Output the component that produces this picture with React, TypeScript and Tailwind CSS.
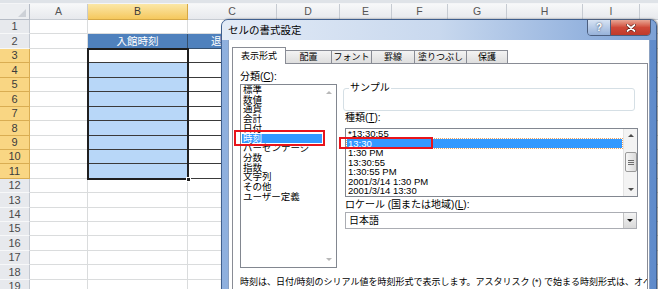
import React from "react";

const colW = ["w-[58px]", "w-[100px]", "w-[89px]", "w-[63px]", "w-[52px]", "w-[56px]", "w-[59px]", "w-[76px]", "w-[57px]", "w-[50px]"];
const colLabel = ["A", "B", "C", "D", "E", "F", "G", "H", "I", ""];
const rowH = ["h-[14px]", "h-[15px]", "h-[14px]", "h-[15px]", "h-[14px]", "h-[15px]", "h-[14px]", "h-[15px]", "h-[14px]", "h-[14px]", "h-[15px]", "h-[14px]", "h-[15px]", "h-[14px]", "h-[14px]", "h-[15px]", "h-[14px]", "h-[15px]", "h-[14px]"];

const categories = ["標準", "数値", "通貨", "会計", "日付", "時刻", "パーセンテージ", "分数", "指数", "文字列", "その他", "ユーザー定義"];
const types = ["*13:30:55", "13:30", "1:30 PM", "13:30:55", "1:30:55 PM", "2001/3/14 1:30 PM", "2001/3/14 13:30"];

function cellClass(r: number, c: number) {
    // c: 0 = A, 1 = B, 2 = C ...
    if (r === 2 && (c === 1 || c === 2)) return "bg-[#4f81bd] text-white border-r border-b border-[#35506f]";
    if (r >= 3 && r <= 11 && c === 1) return (r === 3 ? "bg-white" : "bg-[#b8d7f8]") + " border-r border-b border-[#3a3a3a]";
    if (r >= 3 && r <= 11 && c === 2) return "bg-white border-r border-b border-r-[#dadcdd] border-b-[#3a3a3a]";
    return "bg-white border-r border-b border-[#dadcdd]";
}

function Sheet() {
    return (
        <div className="flex flex-col">
            <div className="h-[4px] bg-[#dfe3e8] border-b border-[#f4f5f7]" />
            <div className="flex h-[16px]">
                <div className="w-[30px] shrink-0 bg-[#eceef1] border-r border-b border-[#b6bcc6] relative">
                    <div className="absolute right-[3px] bottom-[2px] w-0 h-0 border-l-[8px] border-l-transparent border-b-[8px] border-b-[#cdd1d7]" />
                </div>
                {colLabel.map((c, i) => (
                    <div
                        key={i}
                        className={`${colW[i]} shrink-0 flex items-center justify-center border-r border-b text-[10.5px] leading-none ${c === "B" ? "bg-gradient-to-b from-[#fbe7a6] to-[#f5c85c] border-[#d6a845] text-[#3a3a3a]" : "bg-gradient-to-b from-[#f7f8f9] to-[#e7e9ed] border-[#c6cbd2] text-[#555]"}`}
                    >
                        {c}
                    </div>
                ))}
            </div>
            {rowH.map((h, ri) => {
                const r = ri + 1;
                const hl = r >= 3 && r <= 11;
                return (
                    <div key={r} className={`flex ${h}`}>
                        <div className={`w-[30px] shrink-0 flex items-center justify-center border-r border-b text-[11px] leading-none ${hl ? "bg-[#f9d683] border-[#d9ad52] text-[#3c3c3c]" : "bg-[#e7e9ed] border-[#c3c8d0] border-b-[#f7f8f9] text-[#4a4a4a]"}`}>
                            {r}
                        </div>
                        {colLabel.map((c, ci) => (
                            <div key={ci} className={`${colW[ci]} shrink-0 flex items-center justify-center text-[10.5px] leading-none overflow-hidden whitespace-nowrap ${cellClass(r, ci)}`}>
                                {r === 2 && ci === 1 ? "入館時刻" : r === 2 && ci === 2 ? "退館時刻" : ""}
                            </div>
                        ))}
                    </div>
                );
            })}
        </div>
    );
}

function Arrow({ up, color }: { up: boolean; color: string }) {
    return up ? (
        <div className={`w-0 h-0 border-l-[3px] border-r-[3px] border-l-transparent border-r-transparent border-b-[3px] ${color}`} />
    ) : (
        <div className={`w-0 h-0 border-l-[3px] border-r-[3px] border-l-transparent border-r-transparent border-t-[3px] ${color}`} />
    );
}

function Dialog() {
    return (
        <div className="absolute left-[221px] top-[19px] w-[436px] h-[290px] rounded-t-[7px] border border-[#3f5f8e] bg-gradient-to-r from-[#8fb0de] to-[#5f8bcb] shadow-[1px_0_2px_rgba(0,0,0,0.5)]">
            <div className="h-[20px] rounded-t-[6px] bg-gradient-to-r from-[#e3ebf6] via-[#c8d8ee] to-[#7ca1d6] flex items-center pl-[6px] text-[10.5px] leading-none text-black">
                セルの書式設定
            </div>
            <div className="absolute right-[5px] top-[-1px] flex h-[17px] rounded-b-[4px] border border-[#4b5e7e] overflow-hidden">
                <div className="w-[23px] bg-gradient-to-b from-[#d7e3f3] to-[#97b2da] border-r border-[#4b5e7e] flex items-center justify-center text-white font-bold text-[10px] leading-none [text-shadow:0_0_2px_#24364f]">
                    ?
                </div>
                <div className="w-[39px] bg-gradient-to-b from-[#e7a595] via-[#cf4838] to-[#bf3a2c] flex items-center justify-center">
                    <svg width="10" height="8" viewBox="0 0 10 8">
                        <path d="M1.5 1 L8.5 7 M8.5 1 L1.5 7" stroke="#5a1a12" strokeWidth="3" strokeLinecap="round" />
                        <path d="M1.5 1 L8.5 7 M8.5 1 L1.5 7" stroke="#ffffff" strokeWidth="1.8" strokeLinecap="round" />
                    </svg>
                </div>
            </div>
            <div className="mx-[6px] h-[270px] bg-white border-x border-[#8ba1c2] pl-[3px] pt-[7px]">
                {/* tabs */}
                <div className="flex items-end text-[9px] leading-none text-black whitespace-nowrap">
                    <div className="w-[54px] h-[17px] -mb-px relative z-10 bg-white border border-b-0 border-[#898c95] flex items-center justify-center">表示形式</div>
                    {[["配置", "w-[46px]"], ["フォント", "w-[40px]"], ["罫線", "w-[43px]"], ["塗りつぶし", "w-[52px]"], ["保護", "w-[41px]"]].map(([t, w]) => (
                        <div key={t} className={`${w} h-[13px] border-t border-r border-[#898c95] bg-gradient-to-b from-[#f3f3f3] to-[#dedede] flex items-center justify-center`}>
                            {t}
                        </div>
                    ))}
                </div>
                {/* panel */}
                <div className="w-[416px] h-[240px] border border-[#898c95] bg-white overflow-hidden text-black">
                    <div className="flex pl-[7px] pt-[8px] gap-[8px]">
                        <div className="w-[97px] flex flex-col">
                            <div className="h-[10px] text-[10px] leading-[10px]">
                                分類(<span className="underline">C</span>):
                            </div>
                            <div className="mt-[2px] h-[184px] border border-[#828790] flex">
                                <div className="flex-1 text-[9.5px] leading-[9.7px]">
                                    {categories.map((c) => (
                                        <div key={c} className={`ml-[1px] pl-[1px] whitespace-nowrap ${c === "時刻" ? "bg-[#3399ff] text-white" : ""}`}>
                                            {c}
                                        </div>
                                    ))}
                                </div>
                                <div className="w-[14px] flex flex-col justify-between items-center py-[6px]">
                                    <Arrow up color="border-b-[#b8b8b8]" />
                                    <Arrow up={false} color="border-t-[#b8b8b8]" />
                                </div>
                            </div>
                        </div>
                        <div className="w-[293px] flex flex-col">
                            <div className="mt-[16px] h-[23px] w-[292px] -ml-[2px] border border-[#d5dfe5] rounded-[3px] relative">
                                <span className="absolute left-[5px] -top-[6px] bg-white px-[1px] text-[10px] leading-[10px]">サンプル</span>
                            </div>
                            <div className="mt-[2px] h-[10px] text-[10px] leading-[10px]">
                                種類(<span className="underline">T</span>):
                            </div>
                            <div className="mt-[5px] h-[69px] border border-[#828790] flex">
                                <div className="flex-1 text-[9.5px] leading-[9.5px]">
                                    {types.map((t, i) => (
                                        <div key={i} className={`ml-[1px] mr-[1px] pl-[1px] whitespace-nowrap ${i === 1 ? "bg-[#3399ff] text-white outline-dotted outline-1 outline-[#e9a060]" : ""}`}>
                                            {t}
                                        </div>
                                    ))}
                                </div>
                                <div className="w-[14px] bg-[#f3f3f3] border-l border-[#e4e4e4] flex flex-col items-center">
                                    <div className="h-[13px] flex items-center justify-center">
                                        <Arrow up color="border-b-[#4d4d4d]" />
                                    </div>
                                    <div className="mt-[10px] h-[20px] w-[12px] rounded-[2px] border border-[#9a9a9a] bg-gradient-to-r from-[#f6f6f6] to-[#dadada] flex flex-col items-center justify-center gap-[1px]">
                                        <div className="w-[6px] h-px bg-[#6e6e6e]" />
                                        <div className="w-[6px] h-px bg-[#6e6e6e]" />
                                        <div className="w-[6px] h-px bg-[#6e6e6e]" />
                                    </div>
                                    <div className="flex-1" />
                                    <div className="h-[13px] flex items-center justify-center">
                                        <Arrow up={false} color="border-t-[#4d4d4d]" />
                                    </div>
                                </div>
                            </div>
                            <div className="mt-[3px] h-[10px] text-[10px] leading-[10px] whitespace-nowrap">
                                ロケール (国または地域)(<span className="underline">L</span>):
                            </div>
                            <div className="mt-[2px] h-[17px] w-[292px] border border-[#abadb3] flex items-center">
                                <div className="flex-1 pl-[3px] text-[10px] leading-none">日本語</div>
                                <div className="w-[13px] h-full border-l border-[#c3c3c3] bg-gradient-to-b from-[#f4f4f4] to-[#d9d9d9] flex items-center justify-center">
                                    <Arrow up={false} color="border-t-[#111]" />
                                </div>
                            </div>
                        </div>
                    </div>
                    <div className="pl-[7px] mt-[9px] whitespace-nowrap text-[9px] leading-[10px]">
                        時刻は、日付/時刻のシリアル値を時刻形式で表示します。アスタリスク (*) で始まる時刻形式は、オペ
                    </div>
                </div>
            </div>
        </div>
    );
}

export default function App() {
    return (
        <div className="relative w-[658px] h-[289px] overflow-hidden bg-white font-['Liberation_Sans','Noto_Sans_CJK_JP',sans-serif]">
            <Sheet />
            {/* selection B3:B11 */}
            <div className="absolute left-[87px] top-[48px] w-[102px] h-[132px] border-2 border-[#1f1f1f]" />
            <div className="absolute left-[186px] top-[177px] w-[5px] h-[5px] bg-[#1f1f1f] border border-white" />
            <Dialog />
            {/* red annotation boxes */}
            <div className="absolute left-[234px] top-[130px] w-[91px] h-[16px] border-2 border-[#e8141b]" />
            <div className="absolute left-[339px] top-[137px] w-[94px] h-[12px] border-2 border-[#e8141b]" />
        </div>
    );
}
